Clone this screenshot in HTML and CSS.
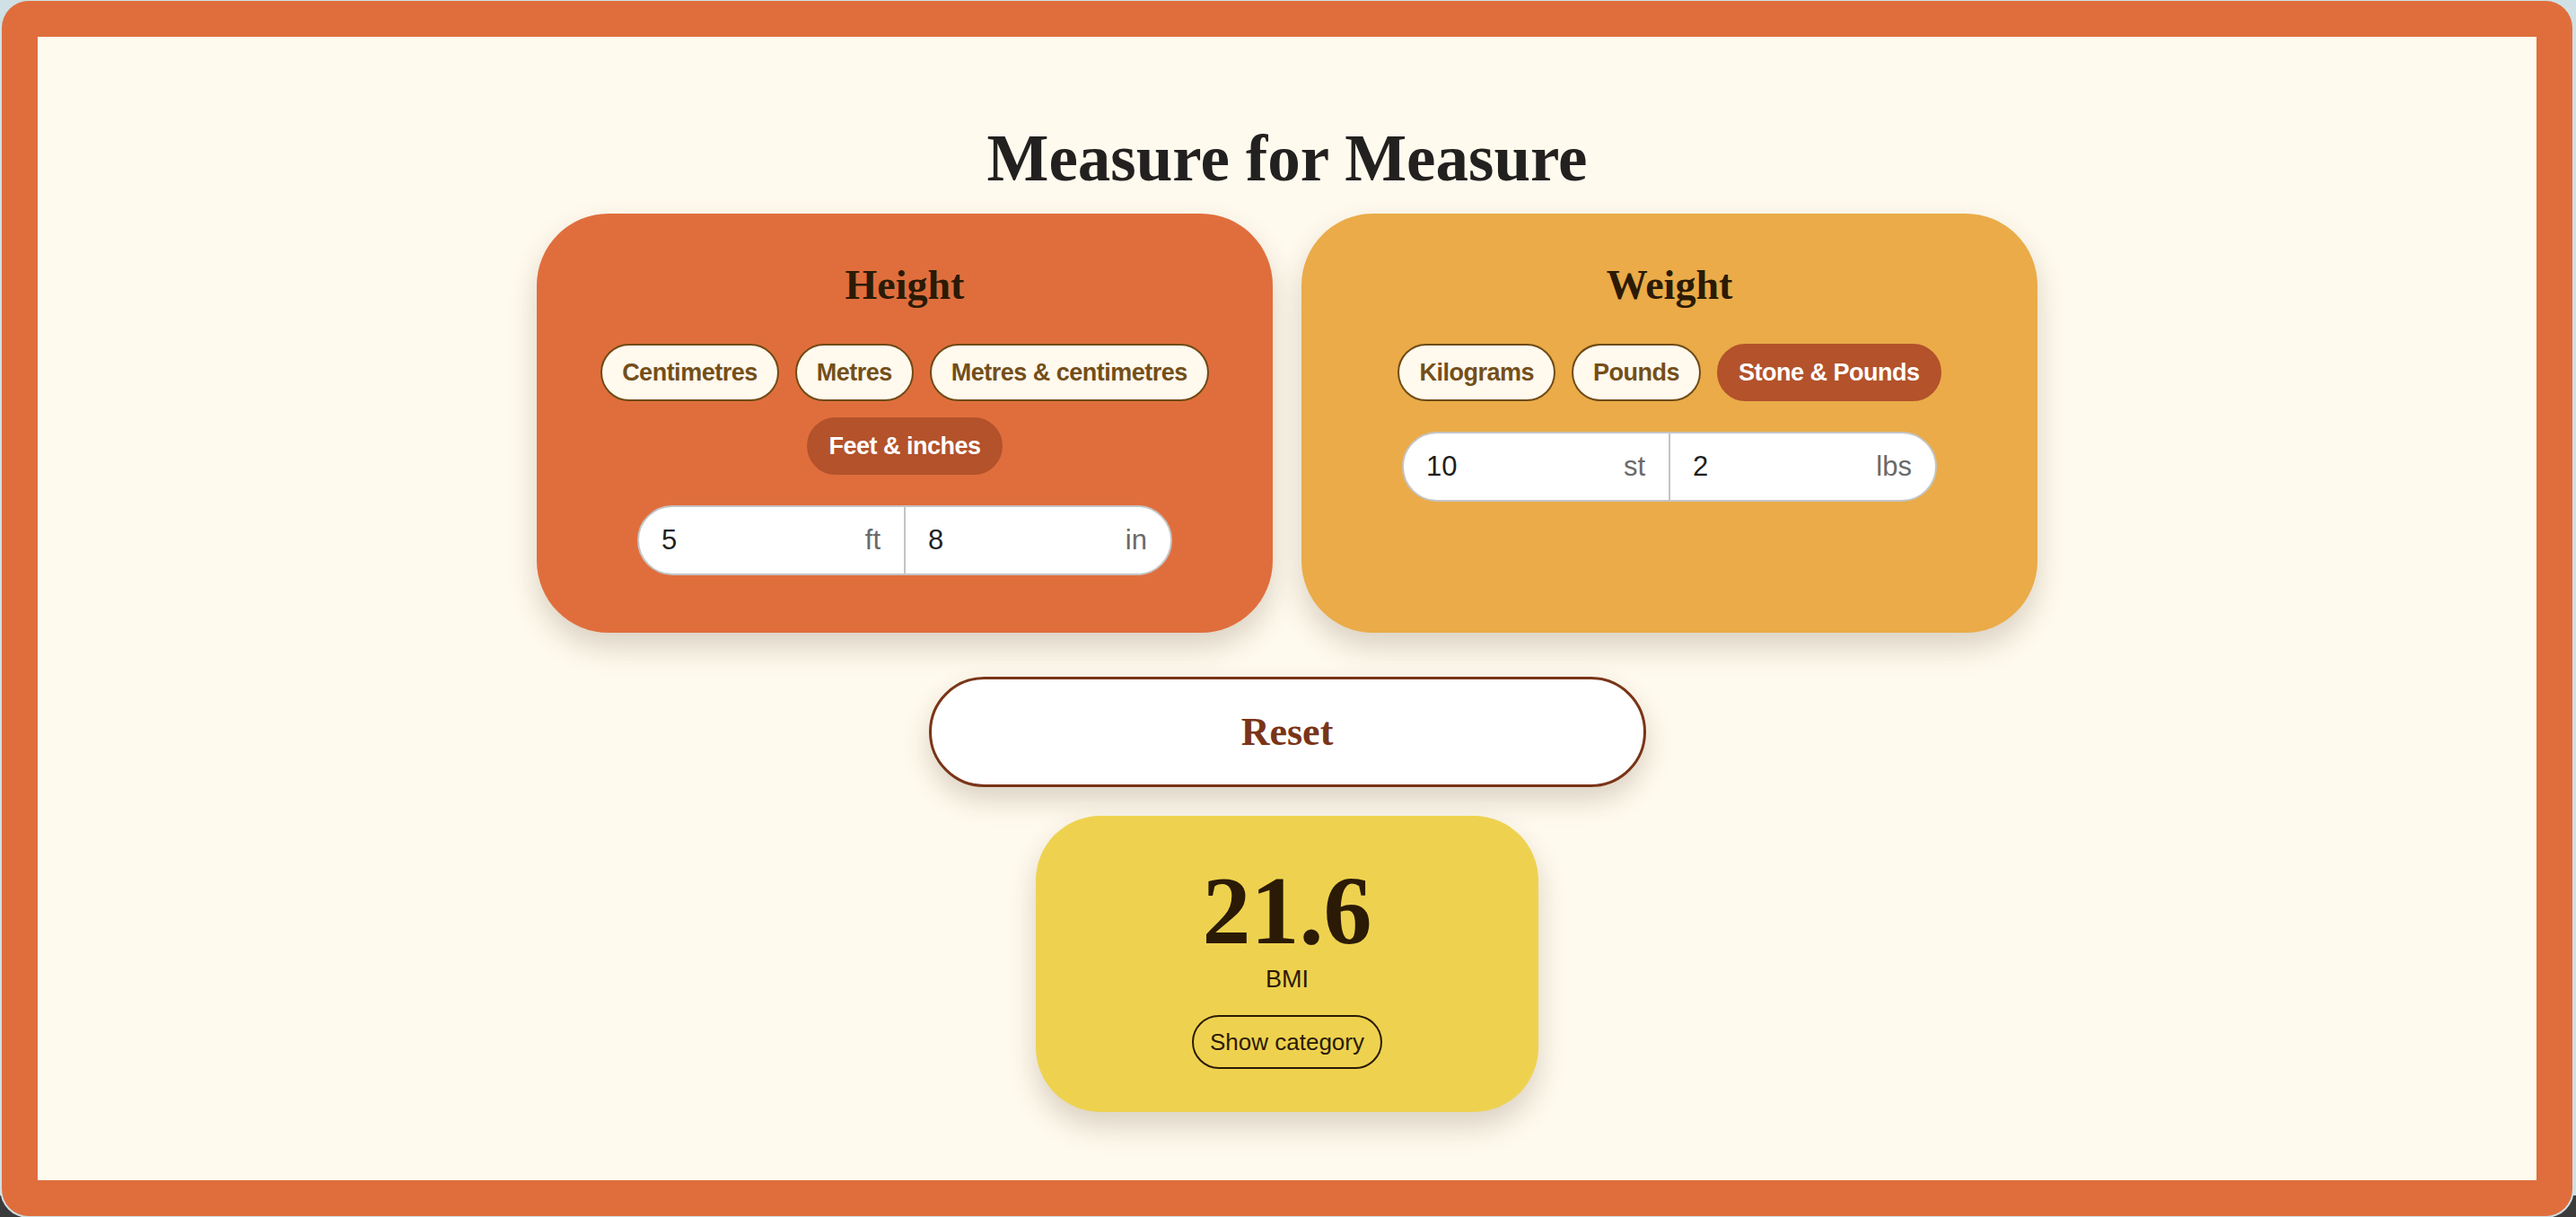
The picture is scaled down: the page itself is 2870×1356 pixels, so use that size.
FILE: index.html
```html
<!DOCTYPE html>
<html lang="en">
<head>
<meta charset="utf-8">
<title>Measure for Measure</title>
<link rel="stylesheet" href="styles.css">
</head>
<body>
<div class="window">
  <main class="app">
    <h1 class="title">Measure for Measure</h1>
    <div class="cards">
      <section class="card card-height">
        <h2 class="card-title">Height</h2>
        <div class="units">
          <button class="unit">Centimetres</button>
          <button class="unit">Metres</button>
          <button class="unit">Metres &amp; centimetres</button>
          <button class="unit active">Feet &amp; inches</button>
        </div>
        <div class="fields">
          <div class="field"><span class="value">5</span><span class="suffix">ft</span></div>
          <div class="field"><span class="value">8</span><span class="suffix">in</span></div>
        </div>
      </section>
      <section class="card card-weight">
        <h2 class="card-title">Weight</h2>
        <div class="units">
          <button class="unit">Kilograms</button>
          <button class="unit">Pounds</button>
          <button class="unit active">Stone &amp; Pounds</button>
        </div>
        <div class="fields">
          <div class="field"><span class="value">10</span><span class="suffix">st</span></div>
          <div class="field"><span class="value">2</span><span class="suffix">lbs</span></div>
        </div>
      </section>
    </div>
    <button class="reset">Reset</button>
    <section class="result">
      <div class="bmi-value">21.6</div>
      <div class="bmi-label">BMI</div>
      <button class="category">Show category</button>
    </section>
  </main>
</div>
</body>
</html>
```

FILE: styles.css
```css
* { box-sizing: border-box; }

html, body {
  margin: 0;
  height: 100%;
}

body {
  background: linear-gradient(to bottom, #cfe1e4 calc(100% - 24px), #3b3b3b calc(100% - 24px));
  font-family: "Liberation Sans", Arial, sans-serif;
}

.window {
  margin: 1px 4px 1px 2px;
  height: 1354px;
  border: 40px solid #e06e3d;
  border-radius: 30px;
  background: #fffaee;
  box-shadow: 0 0 0 2px #cfe1e4;
  overflow: hidden;
}

.app {
  display: flex;
  flex-direction: column;
  align-items: center;
  padding-top: 100px;
}

.title {
  margin: 0;
  font: 700 73px/72px "Liberation Serif", "Times New Roman", serif;
  color: #23211f;
}

.cards {
  display: flex;
  gap: 32px;
  margin-top: 25px;
}

.card {
  width: 820px;
  border-radius: 80px;
  padding: 57px 50px 64px;
  display: flex;
  flex-direction: column;
  align-items: center;
  box-shadow: 0 16px 32px rgba(70, 50, 20, 0.2);
}

.card-height { background: #e06e3d; }
.card-weight { background: #eaab48; }

.card-title {
  margin: 0;
  font: 700 46px/45px "Liberation Serif", "Times New Roman", serif;
  color: #2b1a05;
}

.units {
  margin-top: 43px;
  display: flex;
  flex-wrap: wrap;
  justify-content: center;
  gap: 18px;
}

.unit {
  font: 700 27px/30px "Liberation Sans", Arial, sans-serif;
  letter-spacing: -0.5px;
  padding: 15px 22px;
  border: 2px solid #6f4a15;
  border-radius: 999px;
  background: #fff9ee;
  color: #744f19;
}

.unit.active {
  background: #b3522b;
  border-color: #b3522b;
  color: #ffffff;
}

.fields {
  margin-top: 34px;
  width: 596px;
  height: 78px;
  display: flex;
  border: 2px solid #c4c4c4;
  border-radius: 999px;
  background: #ffffff;
  overflow: hidden;
}

.field {
  flex: 1;
  display: flex;
  align-items: center;
  justify-content: space-between;
  padding: 0 26px 0 25px;
  font: 400 31px/34px "Liberation Sans", Arial, sans-serif;
}

.field + .field {
  border-left: 2px solid #c4c4c4;
}

.value { color: #1f1f1f; }
.suffix { color: #6a6a6a; }

.reset {
  margin-top: 49px;
  width: 799px;
  height: 123px;
  border: 3px solid #7a3418;
  border-radius: 999px;
  background: #ffffff;
  font: 700 44px/48px "Liberation Serif", "Times New Roman", serif;
  color: #7a3418;
  box-shadow: 0 14px 30px rgba(70, 50, 20, 0.2);
}

.result {
  margin-top: 32px;
  width: 560px;
  border-radius: 72px;
  background: #eed24f;
  padding: 52px 0 48px;
  display: flex;
  flex-direction: column;
  align-items: center;
  box-shadow: 0 16px 32px rgba(70, 50, 20, 0.2);
}

.bmi-value {
  font: 700 108px/108px "Liberation Serif", "Times New Roman", serif;
  color: #2b1a05;
}

.bmi-label {
  margin-top: 7px;
  font: 400 27px/31px "Liberation Sans", Arial, sans-serif;
  color: #2b1a05;
}

.category {
  margin-top: 24px;
  font: 400 26px/30px "Liberation Sans", Arial, sans-serif;
  padding: 13px 18px;
  border: 2px solid #2b1a05;
  border-radius: 999px;
  background: transparent;
  color: #2b1a05;
}
```
